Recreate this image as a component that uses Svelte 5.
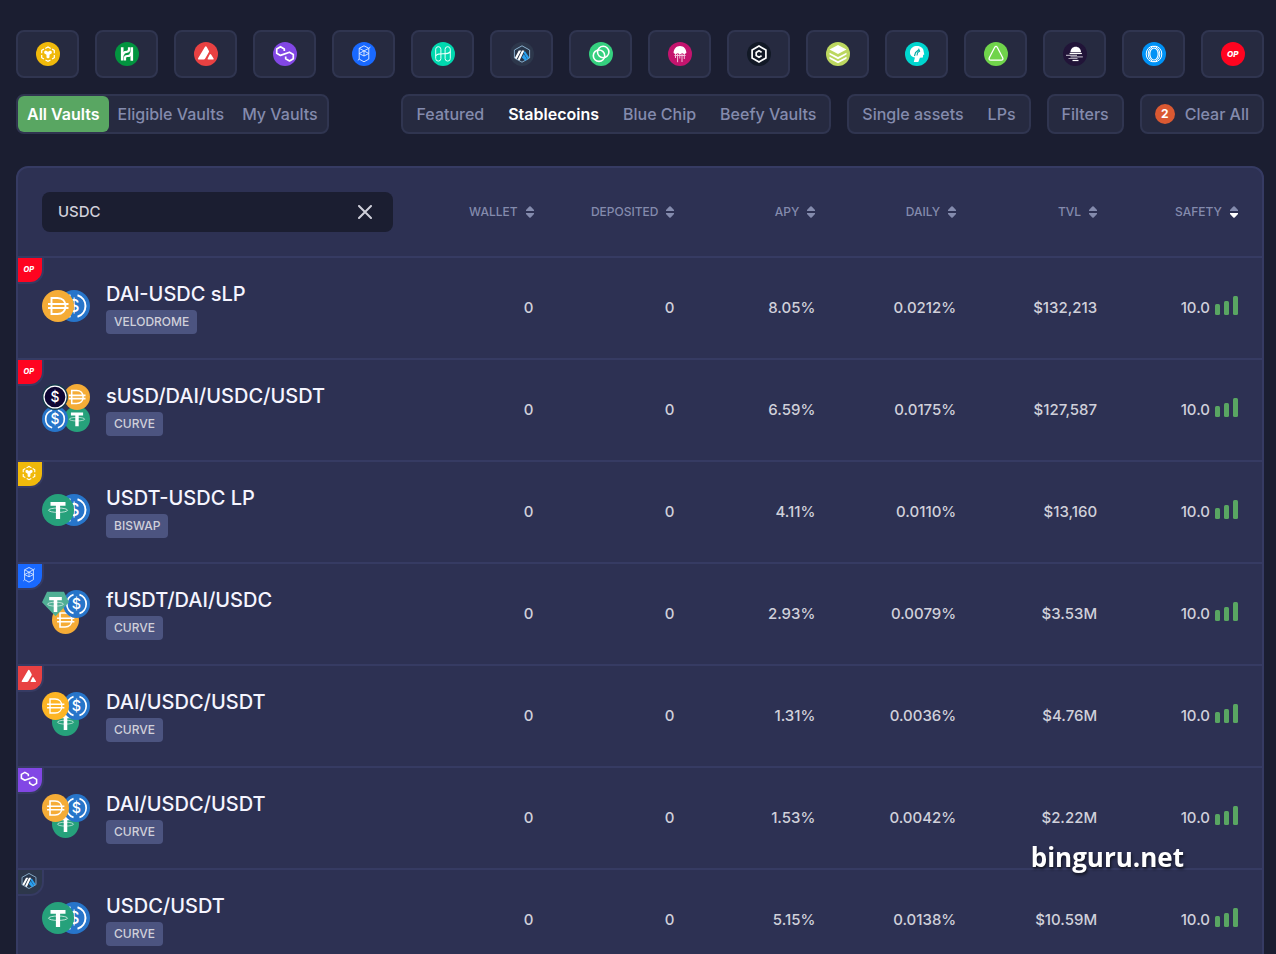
<script>
    const chains = [
        { id: "bsc", name: "BNB Chain", color: "#f0b90b" },
        { id: "heco", name: "Heco", color: "#02943f" },
        { id: "avax", name: "Avalanche", color: "#e84142" },
        { id: "polygon", name: "Polygon", color: "#8247e5" },
        { id: "fantom", name: "Fantom", color: "#1969ff" },
        { id: "harmony", name: "Harmony", color: "#00d8af" },
        { id: "arbitrum", name: "Arbitrum", color: "#2d374b" },
        { id: "celo", name: "Celo", color: "#35d07f" },
        { id: "moonriver", name: "Moonriver", color: "#c4146e" },
        { id: "cronos", name: "Cronos", color: "#121926" },
        { id: "fuse", name: "Fuse", color: "#bcd75f" },
        { id: "metis", name: "Metis", color: "#00d6cf" },
        { id: "aurora", name: "Aurora", color: "#70d44b" },
        { id: "moonbeam", name: "Moonbeam", color: "#211438" },
        { id: "emerald", name: "Emerald", color: "#0092f6" },
        { id: "optimism", name: "Optimism", color: "#ff0420" },
    ];

    const views = ["All Vaults", "Eligible Vaults", "My Vaults"];
    const categories = ["Featured", "Stablecoins", "Blue Chip", "Beefy Vaults"];
    const assetTypes = ["Single assets", "LPs"];
    const columns = ["Wallet", "Deposited", "APY", "Daily", "TVL", "Safety"];

    const vaults = [
        { chain: "optimism", name: "DAI-USDC sLP", platform: "Velodrome", tokens: ["dai", "usdc"], apy: "8.05%", daily: "0.0212%", tvl: "$132,213" },
        { chain: "optimism", name: "sUSD/DAI/USDC/USDT", platform: "Curve", tokens: ["susd", "dai", "usdc", "usdt"], apy: "6.59%", daily: "0.0175%", tvl: "$127,587" },
        { chain: "bsc", name: "USDT-USDC LP", platform: "Biswap", tokens: ["usdt", "usdc"], apy: "4.11%", daily: "0.0110%", tvl: "$13,160" },
        { chain: "fantom", name: "fUSDT/DAI/USDC", platform: "Curve", tokens: ["fusdt", "usdc", "dai"], apy: "2.93%", daily: "0.0079%", tvl: "$3.53M" },
        { chain: "avax", name: "DAI/USDC/USDT", platform: "Curve", tokens: ["daie", "usdc", "usdt"], apy: "1.31%", daily: "0.0036%", tvl: "$4.76M" },
        { chain: "polygon", name: "DAI/USDC/USDT", platform: "Curve", tokens: ["dai", "usdc", "usdt"], apy: "1.53%", daily: "0.0042%", tvl: "$2.22M" },
        { chain: "arbitrum", name: "USDC/USDT", platform: "Curve", tokens: ["usdt", "usdc"], apy: "5.15%", daily: "0.0138%", tvl: "$10.59M" },
    ];

    // [x, y, width, height] of each coin, by number of coins in the group
    const slots = {
        2: [[0, 8, 32, 32], [16, 8, 32, 32]],
        3: [[0, 2, 27, 28], [21, 2, 27, 28], [10, 18, 27, 28]],
        4: [[0, 0, 26, 26], [22, 0, 26, 26], [0, 22, 26, 26], [22, 22, 26, 26]],
    };

    let view = $state("All Vaults");
    let category = $state("Stablecoins");
    let assetType = $state("");
    let sortBy = $state("Safety");
    let query = $state("USDC");

    let shown = $derived(
        vaults.filter((v) => v.name.toLowerCase().includes(query.trim().toLowerCase()))
    );

    function chainColor(id) {
        return chains.find((c) => c.id === id).color;
    }

    // first coin goes on top, so the group is drawn back to front
    function coins(tokens) {
        return tokens.map((token, i) => ({ token, box: slots[tokens.length][i] })).reverse();
    }

    function clearAll() {
        query = "";
        category = "";
        assetType = "";
    }
</script>

{#snippet chainIcon(id)}
    <svg class="chain-icon" viewBox="0 0 24 24" aria-hidden="true">
        {#if id === "bsc"}
            <path d="M9.300 6.400 12 4.900l2.700 1.500M16 7.100l2.300 1.300v2.800M18.300 13v2.700L16 17M14.500 17.900 12 19.300l-2.500-1.400M8 17l-2.300-1.300V13M5.700 11.200V8.400L8 7.100" fill="none" stroke="#fff" stroke-width="1.200" />
            <path d="M8.200 9.400 9.800 8.500l2.200 1.300 2.200-1.300 1.600.9v1.900l-2.300 1.400v2.900l-1.500.9-1.500-.9v-2.900l-2.300-1.400z" fill="#fff" />
        {:else if id === "heco"}
            <path d="M7.200 5.200v13.200M16.800 5.200v13.600" fill="none" stroke="#fff" stroke-width="2.600" />
            <path d="M10 18.400v-2.200c0-1.400.8-2.200 2.200-2.200 2.400 0 3.800-1.300 3.800-3.600M14 5.200v2.400c0 1.400-.8 2.200-2.200 2.200-2.400 0-3.800 1.300-3.800 3.600" fill="none" stroke="#fff" stroke-width="2.200" />
        {:else if id === "avax"}
            <path d="M11 4.700q.8-1.100 1.600 0l2.200 4q.5.800 0 1.600l-3.600 6.300q-.5.900-1.500.900H4.800q-1.300 0-.7-1.200z" fill="#fff" />
            <path d="M15.700 12.600q.7-1.100 1.400 0l2.500 4q.5.900-.5.900h-4.800q-1.100 0-.6-.9z" fill="#fff" />
        {:else if id === "polygon"}
            <path d="M11.300 9V6.900L7.500 4.700 3.700 6.900v4.300l3.800 2.200 9-3.200 3.800 2.200v4.300l-3.800 2.200-3.800-2.200v-2.100" fill="none" stroke="#fff" stroke-width="1.700" stroke-linejoin="round" />
        {:else if id === "fantom"}
            <path d="M12 3.800 16.800 6.300v10.800L12 19.800l-4.800-2.700V6.300zM7.200 6.300l9.600 5.200M16.800 6.300l-9.600 5.200M7.200 11.500 12 14l4.800-2.500M12 8.900V14M16.800 6.300l1.600-1.200M7.200 17.100l-1.400 1.300" fill="none" stroke="#e6efff" stroke-width=".9" />
        {:else if id === "harmony"}
            <rect x="4.700" y="4.700" width="5.200" height="14.400" rx="2.600" fill="none" stroke="#e7fffa" stroke-width="1" />
            <rect x="14.100" y="4.700" width="5.200" height="14.400" rx="2.600" fill="none" stroke="#e7fffa" stroke-width="1" />
            <path d="M4.700 14c1.500-2.200 3.200-2.200 7.300-2.200s5.800 0 7.300-2.200" fill="none" stroke="#e7fffa" stroke-width="1.100" />
        {:else if id === "arbitrum"}
            <path d="M12 3.800 19.600 8v8L12 20.200 4.400 16V8z" fill="#28364a" stroke="#96bedc" stroke-width=".9" />
            <path d="M13 9.500h2.200l4 6-1.700 1.700zM11.800 15.400l2.100-3.400 3.400 5.500-1.900 1.200z" fill="#28a0f0" />
            <path d="M8.800 8.400h2.400L6.700 17 4.800 15.900zM12 8.400h2.300L9.600 18.600 7.700 17.500z" fill="#fff" />
        {:else if id === "celo"}
            <circle cx="10" cy="13.700" r="5.700" fill="none" stroke="#fff" stroke-width="1.600" />
            <circle cx="14.200" cy="10" r="5.700" fill="none" stroke="#fff" stroke-width="1.600" />
        {:else if id === "moonriver"}
            <path d="M5.600 11C5.600 6.800 8.300 4 12 4s6.400 2.800 6.400 7l-2.100 1.200-2-1-2.300 1-2.300-1-2.200 1z" fill="#fff" />
            <path d="M6.400 13.500h11.200M7.500 12v4M9.600 12v8.200M11.800 12v4.500M14 12v8M16.300 12v5" stroke="#f2c5dc" stroke-width="1" />
        {:else if id === "cronos"}
            <path d="m12 4.100 6.900 3.900v8L12 19.900 5.100 16V8z" fill="none" stroke="#fff" stroke-width="1.700" />
            <path d="M14.600 10.200 12 8.800 9.200 10.400v3.200l2.800 1.600 2.600-1.400" fill="none" stroke="#fff" stroke-width="1.700" />
        {:else if id === "fuse"}
            <path d="m12 3 8.500 4.500L12 12 3.500 7.500z" fill="#fff" />
            <path d="m3.500 10.700 8.500 4.400 8.500-4.400v1.900L12 17.200l-8.500-4.600zM3.500 14.800l8.500 4.400 8.500-4.400v1.900L12 21.200l-8.500-4.500z" fill="#fff" />
        {:else if id === "metis"}
            <path d="M5 9.500C5.500 6 8.500 4 12 4c4 0 6.700 2.600 6.700 5.800l.6 2.700-1.200.5-.2 2.500-3 .3-1.600 4.200H8.800l1.100-4.500C6.500 15 4.600 12.700 5 9.500z" fill="#fff" />
            <path d="m9.500 14 1-3.500 3-2.500M12 13.500l.6-3M13.600 6.600l1 2.600-2 1.300" fill="none" stroke="#00a9a5" stroke-width="1.100" />
        {:else if id === "aurora"}
            <path d="M10.600 5.500q1.400-2.300 2.800 0l5.300 10.200q.9 2.300-1.500 2.500H6.800q-2.400-.2-1.500-2.500z" fill="none" stroke="#fff" stroke-width="1.300" />
        {:else if id === "moonbeam"}
            <path d="M7.400 10.200C7.600 6.900 9.700 4.700 12.700 4.700s5.200 2.200 5.300 5.500z" fill="#fff" />
            <path d="M6.600 11.500h12.300" stroke="#fff" stroke-width="1.200" />
            <path d="M3 13.300h11M7.500 14.900h12.300M5.500 16.500h9" stroke="#aaa4b4" stroke-width="1.200" />
            <path d="M9.500 18.500h6" stroke="#fff" stroke-width="1.200" />
        {:else if id === "emerald"}
            <ellipse cx="11" cy="12" rx="6.800" ry="7.800" fill="none" stroke="#fff" stroke-width="1" />
            <ellipse cx="13" cy="12" rx="6.800" ry="7.800" fill="none" stroke="#fff" stroke-width="1" />
            <ellipse cx="12" cy="12" rx="4.200" ry="6" fill="none" stroke="#fff" stroke-width="1.200" />
        {:else if id === "optimism"}
            <text x="11.800" y="15" text-anchor="middle" class="op">OP</text>
        {/if}
    </svg>
{/snippet}

{#snippet coin(token, [x, y, width, height])}
    <svg {x} {y} {width} {height} viewBox="0 0 32 32" preserveAspectRatio="none">
        {#if token === "dai" || token === "daie"}
            <circle cx="16" cy="16" r="16" fill={token === "dai" ? "#f5ac37" : "#fdb525"} />
            <path d="M9.500 8h6c5 0 8 3.300 8 8s-3 8-8 8h-6zM6 14h20.500M6 18h20.500" fill="none" stroke="#fff" stroke-width={token === "dai" ? 1.900 : 1.600} />
        {:else if token === "usdc"}
            <circle cx="16" cy="16" r="16" fill="#2775ca" />
            <path d="M12.500 5.200a11.300 11.300 0 0 0 0 21.600M19.500 5.200a11.300 11.300 0 0 1 0 21.600" fill="none" stroke="#fff" stroke-width="2" />
            <text x="16" y="22" text-anchor="middle" class="dollar">$</text>
        {:else if token === "susd"}
            <circle cx="16" cy="16" r="16" fill="#163c4b" />
            <circle cx="16" cy="16" r="13.500" fill="#0e0634" stroke="#fff" stroke-width="1.500" />
            <text x="16" y="22" text-anchor="middle" class="dollar">$</text>
        {:else}
            {#if token === "usdt"}
                <circle cx="16" cy="16" r="16" fill="#26a17b" />
            {:else}
                <path d="M6 2h20l6 12-16 16L0 14z" fill="#50af95" />
            {/if}
            <path d="M8.500 8h15v3.800h-5.400V25h-4.200V11.800H8.500z" fill="#fff" />
            <ellipse cx="16" cy="16.200" rx="9.500" ry="2.200" fill="none" stroke="#fff" stroke-width=".7" />
        {/if}
    </svg>
{/snippet}

<main>
    <div class="chains">
        {#each chains as chain}
            <button class="chain" aria-label={chain.name}>
                <span class="disc" style="background: {chain.color}">{@render chainIcon(chain.id)}</span>
            </button>
        {/each}
    </div>

    <div class="filters">
        <div class="group views">
            {#each views as item}
                <button class:active={view === item} onclick={() => (view = item)}>{item}</button>
            {/each}
        </div>
        <div class="group">
            {#each categories as item}
                <button class:selected={category === item} onclick={() => (category = item)}>{item}</button>
            {/each}
        </div>
        <div class="group">
            {#each assetTypes as item}
                <button class:selected={assetType === item} onclick={() => (assetType = item)}>{item}</button>
            {/each}
        </div>
        <div class="group"><button>Filters</button></div>
        <div class="group">
            <button class="clear-all" onclick={clearAll}><span class="count">2</span>Clear All</button>
        </div>
    </div>

    <table>
        <thead>
            <tr>
                <th>
                    <div class="search">
                        <input type="text" aria-label="Search vaults" bind:value={query} />
                        <button aria-label="Clear search" onclick={() => (query = "")}>
                            <svg width="14" height="14" viewBox="0 0 14 14" aria-hidden="true">
                                <path d="m1 1 12 12M13 1 1 13" stroke="#d0d0da" stroke-width="2" stroke-linecap="round" />
                            </svg>
                        </button>
                    </div>
                </th>
                {#each columns as column}
                    <th>
                        <button class="sort" onclick={() => (sortBy = column)}>
                            {column}
                            <svg width="8" height="12" viewBox="0 0 8 12" aria-hidden="true">
                                <path d="M3.300.6q.7-.7 1.400 0L8 4v1H0V4z" fill="#848bad" />
                                <path d="M0 7h8v1l-3.300 3.400q-.7.700-1.400 0L0 8z" fill={sortBy === column ? "#fff" : "#848bad"} />
                            </svg>
                        </button>
                    </th>
                {/each}
            </tr>
        </thead>
        <tbody>
            {#each shown as vault}
                <tr>
                    <td class="vault">
                        <span class="network" style="background: {chainColor(vault.chain)}">
                            {@render chainIcon(vault.chain)}
                        </span>
                        <svg class="coins" width="48" height="48" viewBox="0 0 48 48" aria-hidden="true">
                            {#each coins(vault.tokens) as { token, box }}
                                {@render coin(token, box)}
                            {/each}
                        </svg>
                        <div>
                            <a href="#vault">{vault.name}</a>
                            <span class="platform">{vault.platform}</span>
                        </div>
                    </td>
                    <td>0</td>
                    <td>0</td>
                    <td>{vault.apy}</td>
                    <td>{vault.daily}</td>
                    <td>{vault.tvl}</td>
                    <td class="safety">
                        10.0
                        <svg width="24" height="24" viewBox="0 0 24 24" aria-hidden="true">
                            <rect x="1" y="8" width="5" height="11" rx="1.500" />
                            <rect x="10" y="5" width="5" height="14" rx="1.500" />
                            <rect x="19" y="0" width="5" height="19" rx="1.500" />
                        </svg>
                    </td>
                </tr>
            {/each}
        </tbody>
    </table>
</main>

<div class="watermark">binguru.net</div>

<style>
    :global(body) {
        background: #1b1e31;
        color: #d0d0da;
        font-family: "Inter", "Open Sans", sans-serif;
        font-size: 15px;
        font-weight: 500;
        line-height: 24px;
    }

    main {
        padding: 30px 12px 0 16px;
    }

    button {
        padding: 0;
        border: 0;
        background: none;
        color: #848bad;
        font: inherit;
        cursor: pointer;
    }

    .chains {
        display: grid;
        grid-template-columns: repeat(16, 1fr);
        gap: 16px;
    }

    .chain {
        display: flex;
        align-items: center;
        justify-content: center;
        height: 48px;
        border: 2px solid #303550;
        border-radius: 8px;
        background: #262a40;
    }

    .disc {
        width: 24px;
        height: 24px;
        border-radius: 50%;
    }

    .chain-icon {
        display: block;
        width: 100%;
        height: 100%;
    }

    .op {
        fill: #fff;
        font-size: 8px;
        font-style: italic;
        font-weight: 800;
    }

    .dollar {
        fill: #fff;
        font-size: 17px;
        font-weight: 500;
    }

    .filters {
        display: flex;
        gap: 16px;
        margin: 16px 0 32px;
        font-size: 16px;
    }

    .group {
        display: flex;
        box-sizing: border-box;
        height: 40px;
        padding: 0 1px;
        border: 2px solid #303550;
        border-radius: 8px;
        background: #262a40;
        white-space: nowrap;
    }

    .group button {
        padding: 0 12px;
    }

    .views {
        margin-right: auto;
        padding: 0;
    }

    .views button {
        padding: 0 9px;
        border-radius: 6px;
    }

    .views .active {
        background: #59a662;
        color: #fff;
        font-weight: 600;
    }

    .group .selected {
        color: #fff;
        font-weight: 600;
    }

    .clear-all {
        display: flex;
        align-items: center;
        gap: 10px;
    }

    .count {
        width: 20px;
        border-radius: 50%;
        background: #da5932;
        color: #fff;
        font-size: 12px;
        font-weight: 700;
        line-height: 20px;
    }

    table {
        display: block;
        border: 2px solid #363b63;
        border-radius: 12px;
        background: #2d3153;
    }

    thead,
    tbody {
        display: block;
    }

    tr {
        display: grid;
        grid-template-columns: 3fr repeat(6, 1fr);
        column-gap: 24px;
        align-items: center;
        position: relative;
        padding: 24px;
        border-bottom: 2px solid #363b63;
    }

    tbody tr:last-child {
        border-bottom: 0;
    }

    th,
    td {
        min-width: 0;
        padding: 0;
        text-align: right;
    }

    th {
        font-weight: 500;
    }

    .search {
        display: flex;
        height: 40px;
        border-radius: 8px;
        background: #1b1e31;
    }

    .search input {
        flex: 1;
        min-width: 0;
        padding: 0 16px;
        border: 0;
        outline: 0;
        background: none;
        color: #d0d0da;
        font: inherit;
    }

    .search button {
        display: flex;
        align-items: center;
        justify-content: center;
        width: 56px;
    }

    .sort {
        display: flex;
        align-items: center;
        gap: 8px;
        margin-left: auto;
        font-size: 12px;
        text-transform: uppercase;
    }

    .vault {
        display: flex;
        gap: 16px;
        text-align: left;
    }

    .network {
        position: absolute;
        top: 0;
        left: 0;
        box-sizing: border-box;
        width: 26px;
        height: 26px;
        padding: 0 2px 2px 0;
        border: solid #363b63;
        border-width: 0 2px 2px 0;
        border-bottom-right-radius: 14px;
    }

    .coins {
        flex: none;
    }

    .vault a {
        display: block;
        margin-bottom: 4px;
        color: #f5f5ff;
        font-size: 20px;
        text-decoration: none;
    }

    .platform {
        display: block;
        width: fit-content;
        padding: 0 8px;
        border-radius: 4px;
        background: #4c5480;
        font-size: 12px;
        text-transform: uppercase;
    }

    .safety {
        display: flex;
        align-items: center;
        justify-content: flex-end;
        gap: 4px;
    }

    .safety svg {
        fill: #59a662;
    }

    .watermark {
        position: fixed;
        right: 92px;
        bottom: 79px;
        color: #fff;
        font-family: "Open Sans", sans-serif;
        font-size: 26px;
        font-weight: 700;
        line-height: 36px;
        text-shadow: 1px 2px 3px #11131f;
    }
</style>
